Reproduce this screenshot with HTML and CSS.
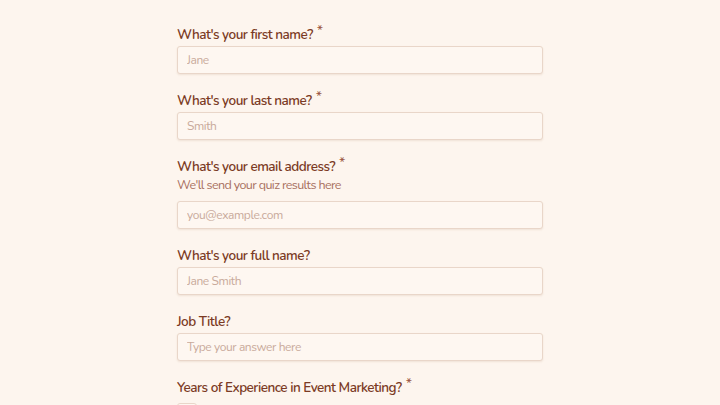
FILE: index.html
```html
<!DOCTYPE html>
<html lang="en">
<head>
    <meta charset="UTF-8">
    <meta name="viewport" content="width=device-width, initial-scale=1.0">
    <title>Event Marketing Quiz</title>
    <link rel="stylesheet" href="styles.css">
</head>
<body>
    <form class="quiz-form">
        <div class="form-group">
            <label for="first">What's your first name? <span class="req">*</span></label>
            <input type="text" id="first" placeholder="Jane">
        </div>

        <div class="form-group">
            <label for="last">What's your last name? <span class="req">*</span></label>
            <input type="text" id="last" placeholder="Smith">
        </div>

        <div class="form-group">
            <label for="email">What's your email address? <span class="req">*</span></label>
            <p class="help">We'll send your quiz results here</p>
            <input type="email" id="email" placeholder="you@example.com">
        </div>

        <div class="form-group">
            <label for="full">What's your full name?</label>
            <input type="text" id="full" placeholder="Jane Smith">
        </div>

        <div class="form-group">
            <label for="job">Job Title?</label>
            <input type="text" id="job" placeholder="Type your answer here">
        </div>

        <div class="form-group">
            <label>Years of Experience in Event Marketing? <span class="req">*</span></label>
            <div class="option"><span class="box"></span></div>
        </div>
    </form>
</body>
</html>
```

FILE: styles.css
```css
:root {
    --bg: #fdf5ee;
    --field: #fef7f1;
    --text: #7b3a24;
    --muted: #a8705f;
    --placeholder: #c9aa9b;
    --border: #e9d6c9;
}

body {
    margin: 0;
    padding: 25px 0 0;
    background: var(--bg);
    font-family: 'Nunito', 'Lato', 'Noto Sans', sans-serif;
    color: var(--text);
    overflow: hidden;
    height: 380px;
}

.quiz-form {
    width: 366px;
    margin: 0 auto;
}

.form-group {
    margin-bottom: 17px;
}

label {
    display: block;
    font-size: 13.5px;
    font-weight: 600;
    letter-spacing: -0.5px;
    line-height: 20px;
    margin-bottom: 1px;
    color: var(--text);
}

.req {
    font-size: 14px;
    font-weight: 400;
    position: relative;
    top: -4px;
    margin-left: 1px;
    color: #9a5640;
}

.help {
    margin: -3px 0 6px;
    font-size: 12.5px;
    letter-spacing: -0.6px;
    line-height: 20px;
    color: var(--muted);
}

input {
    display: block;
    box-sizing: border-box;
    width: 100%;
    height: 28px;
    padding: 0 9px;
    border: 1px solid var(--border);
    border-radius: 3px;
    background: var(--field);
    font-family: inherit;
    font-size: 12px;
    letter-spacing: -0.4px;
    color: var(--text);
    box-shadow: 0 1px 2px rgba(160, 110, 80, 0.14);
}

input::placeholder {
    color: var(--placeholder);
}

input:focus {
    outline: none;
    border-color: var(--muted);
}

.option {
    padding-top: 4px;
}

.box {
    display: block;
    width: 18px;
    height: 14px;
    border: 1px solid var(--border);
    border-radius: 3px;
    background: var(--field);
}
```
